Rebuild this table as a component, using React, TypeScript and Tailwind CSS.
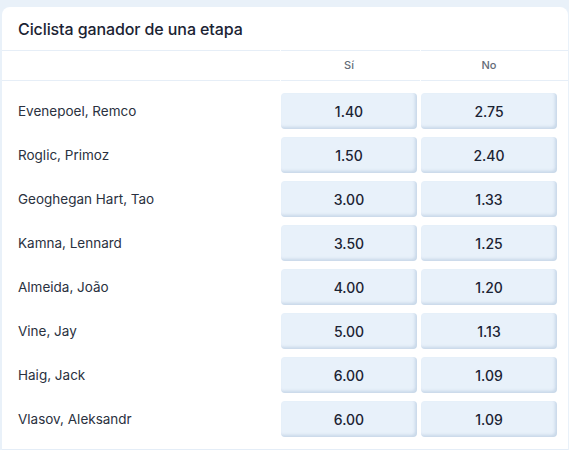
import * as React from "react"

type Row = {
  name: string
  yes: string
  no: string
}

const rows: Row[] = [
  { name: "Evenepoel, Remco", yes: "1.40", no: "2.75" },
  { name: "Roglic, Primoz", yes: "1.50", no: "2.40" },
  { name: "Geoghegan Hart, Tao", yes: "3.00", no: "1.33" },
  { name: "Kamna, Lennard", yes: "3.50", no: "1.25" },
  { name: "Almeida, João", yes: "4.00", no: "1.20" },
  { name: "Vine, Jay", yes: "5.00", no: "1.13" },
  { name: "Haig, Jack", yes: "6.00", no: "1.09" },
  { name: "Vlasov, Aleksandr", yes: "6.00", no: "1.09" },
]

function OddButton({ value }: { value: string }) {
  return (
    <button className="flex h-9 w-[136px] items-center justify-center rounded-[4px] bg-[#e8f1fa] text-[14px] font-medium text-[#1b2333] shadow-[inset_-2px_-2px_3px_rgba(140,168,200,0.35)]">
      {value}
    </button>
  )
}

export default function App() {
  return (
    <div className="min-h-[450px] w-[569px] bg-[#e9f1f9] pl-[2px] pr-px pt-[7px] font-['Inter',sans-serif]">
      <div className="overflow-hidden rounded-t-[8px] border-b border-[#e4edf7] bg-white">
        <div className="flex h-[43px] items-center pl-4">
          <h2 className="text-[16px] font-medium tracking-[-0.1px] text-[#1b2333]">Ciclista ganador de una etapa</h2>
        </div>

        <div className="flex h-[31px] text-[11px] font-medium text-[#646c78]">
          <div className="w-[278px] border-y border-[#e6eef7]" />
          <div className="ml-px flex w-[139px] items-center border-y border-[#e6eef7] pr-[3px]">
            <span className="flex-1 text-center">Sí</span>
          </div>
          <div className="ml-px flex flex-1 items-center border-y border-[#e6eef7] pr-[11px]">
            <span className="flex-1 text-center">No</span>
          </div>
        </div>

        <div className="flex flex-col gap-2 pb-3 pt-3">
          {rows.map((row) => (
            <div key={row.name} className="flex items-center gap-1 pl-4 pr-[11px]">
              <span className="flex-1 text-[13.5px] text-[#2a3140]">{row.name}</span>
              <OddButton value={row.yes} />
              <OddButton value={row.no} />
            </div>
          ))}
        </div>
      </div>
    </div>
  )
}
